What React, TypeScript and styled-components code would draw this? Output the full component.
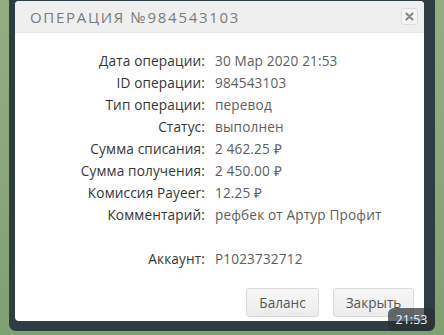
import React from "react";
import styled, { createGlobalStyle } from "styled-components";

const Global = createGlobalStyle`
  html, body { margin: 0; padding: 0; background: #8ea77a; }
  * { box-sizing: border-box; }
`;

const Page = styled.div`
  position: relative;
  width: 444px;
  height: 335px;
  overflow: hidden;
  background: linear-gradient(180deg, #93ad80 0%, #8aa576 60%, #7fa070 100%);
  padding: 0 9px 4px 9px;
  font-family: "Open Sans", "Liberation Sans", sans-serif;
`;

const Frame = styled.div`
  background: #2e3c43;
  height: 331px;
  border-radius: 0 0 7px 7px;
  padding: 1px 11px 10px 6px;
`;

const Dialog = styled.div`
  background: #ffffff;
  height: 320px;
  border-radius: 4px;
  display: flex;
  flex-direction: column;
  overflow: hidden;
`;

const Header = styled.div`
  height: 32px;
  background: #efefef;
  display: flex;
  align-items: center;
  justify-content: space-between;
  padding: 0 6px 0 15px;
  border-bottom: 1px solid #e6e6e6;
`;

const Title = styled.div`
  font-size: 15px;
  letter-spacing: 1.7px;
  color: #7a7a7a;
  text-transform: uppercase;
`;

const CloseBtn = styled.div`
  width: 17px;
  height: 17px;
  border: 1px solid #dcdcdc;
  border-radius: 3px;
  background: #f4f4f4;
  display: flex;
  align-items: center;
  justify-content: center;
`;

const Body = styled.div`
  padding-top: 16px;
  display: grid;
  grid-template-columns: 190px 1fr;
  column-gap: 10px;
  grid-auto-rows: 22px;
  font-size: 13.6px;
  letter-spacing: 0.15px;
  align-items: center;
`;

const Label = styled.div`
  text-align: right;
  color: #353535;
  white-space: nowrap;
`;

const Value = styled.div`
  color: #5e5e5e;
  white-space: nowrap;
`;

const Footer = styled.div`
  margin-top: 19px;
  display: flex;
  justify-content: flex-end;
  gap: 14px;
  padding-right: 10px;
`;

const Button = styled.div<{ $w: number }>`
  width: ${(p) => p.$w}px;
  height: 29px;
  border: 1px solid #dadada;
  border-radius: 3px;
  background: linear-gradient(180deg, #f7f7f7 0%, #ececec 100%);
  color: #555;
  font-size: 13.6px;
  display: flex;
  align-items: center;
  justify-content: center;
`;

const Stamp = styled.div`
  position: absolute;
  left: 388px;
  top: 308px;
  width: 47px;
  height: 23px;
  border-radius: 6px;
  background: rgba(40, 48, 52, 0.72);
  color: #f2f2f2;
  font-size: 12.5px;
  display: flex;
  align-items: center;
  justify-content: center;
`;

const rows: [string, string][] = [
  ["Дата операции:", "30 Мар 2020 21:53"],
  ["ID операции:", "984543103"],
  ["Тип операции:", "перевод"],
  ["Статус:", "выполнен"],
  ["Сумма списания:", "2 462.25 ₽"],
  ["Сумма получения:", "2 450.00 ₽"],
  ["Комиссия Payeer:", "12.25 ₽"],
  ["Комментарий:", "рефбек от Артур Профит"],
  ["", ""],
  ["Аккаунт:", "P1023732712"],
];

export default function App() {
  return (
    <Page>
      <Global />
      <Frame>
        <Dialog>
          <Header>
            <Title>Операция №984543103</Title>
            <CloseBtn>
              <svg width="9" height="9" viewBox="0 0 9 9">
                <path d="M1.5 1.5 L7.5 7.5 M7.5 1.5 L1.5 7.5" stroke="#8a8a8a" strokeWidth="2.2" strokeLinecap="round" />
              </svg>
            </CloseBtn>
          </Header>
          <Body>
            {rows.map(([l, v], i) => (
              <React.Fragment key={i}>
                <Label>{l}</Label>
                <Value>{v}</Value>
              </React.Fragment>
            ))}
          </Body>
          <Footer>
            <Button $w={73}>Баланс</Button>
            <Button $w={81}>Закрыть</Button>
          </Footer>
        </Dialog>
      </Frame>
      <Stamp>21:53</Stamp>
    </Page>
  );
}
